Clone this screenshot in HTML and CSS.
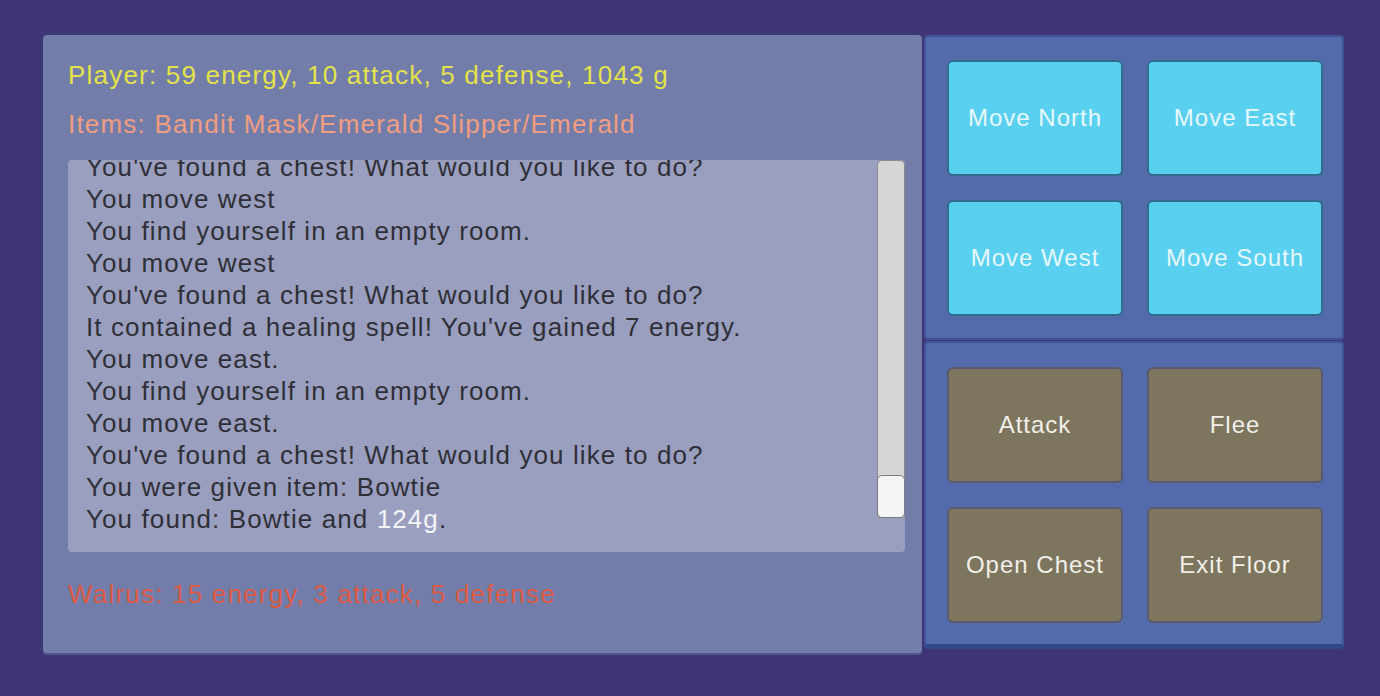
FILE: index.html
```html
<!DOCTYPE html>
<html>
<head>
<meta charset="utf-8">
<link rel="stylesheet" href="styles.css">
</head>
<body>
<div class="screen">
  <div class="main-panel">
    <div class="stat player">Player: 59 energy, 10 attack, 5 defense, 1043 g</div>
    <div class="stat items">Items: Bandit Mask/Emerald Slipper/Emerald</div>
    <div class="log">
      <div class="log-view">
        <div class="log-lines">
          <div>You've found a chest! What would you like to do?</div>
          <div>You move west</div>
          <div>You find yourself in an empty room.</div>
          <div>You move west</div>
          <div>You've found a chest! What would you like to do?</div>
          <div>It contained a healing spell! You've gained 7 energy.</div>
          <div>You move east.</div>
          <div>You find yourself in an empty room.</div>
          <div>You move east.</div>
          <div>You've found a chest! What would you like to do?</div>
          <div>You were given item: Bowtie</div>
          <div>You found: Bowtie and <span class="gold">124g</span>.</div>
        </div>
      </div>
      <div class="scrollbar"><div class="thumb"></div></div>
    </div>
    <div class="stat enemy">Walrus: 15 energy, 3 attack, 5 defense</div>
  </div>
  <div class="side">
    <div class="btn-panel">
      <button class="btn move">Move North</button>
      <button class="btn move">Move East</button>
      <button class="btn move">Move West</button>
      <button class="btn move">Move South</button>
    </div>
    <div class="btn-panel lower">
      <button class="btn action">Attack</button>
      <button class="btn action">Flee</button>
      <button class="btn action">Open Chest</button>
      <button class="btn action">Exit Floor</button>
    </div>
  </div>
</div>
</body>
</html>
```

FILE: styles.css
```css
html, body {
  margin: 0;
  padding: 0;
  background: #3d3576;
  width: 1380px;
  height: 696px;
  overflow: hidden;
  font-family: "Liberation Sans", Arial, sans-serif;
}

.screen {
  display: flex;
  padding: 35px 0 0 43px;
  align-items: flex-start;
}

.main-panel {
  width: 879px;
  height: 618px;
  box-sizing: border-box;
  background: #737daa;
  border-radius: 4px;
  box-shadow: 0 2px 0 #4f5788;
  padding: 24px 17px 0 25px;
  display: flex;
  flex-direction: column;
}

.stat {
  font-size: 26px;
  letter-spacing: 1.2px;
  line-height: 32px;
  height: 32px;
  white-space: nowrap;
}

.player { color: #e3e24a; }
.items { color: #f19d7f; margin-top: 17px; }
.enemy { color: #dc5a44; margin-top: 26px; }

.log {
  margin-top: 20px;
  height: 392px;
  flex: none;
  background: #9a9fc0;
  border-radius: 4px;
  display: flex;
  overflow: hidden;
}

.log-view {
  flex: 1;
  overflow: hidden;
  padding-left: 18px;
}

.log-lines {
  margin-top: -9px;
  color: #2f2f36;
  font-size: 26px;
  letter-spacing: 1.1px;
  line-height: 32px;
  white-space: nowrap;
}

.gold { color: #f4f4f6; }

.scrollbar {
  width: 28px;
  height: 358px;
  flex: none;
  box-sizing: border-box;
  background: #d6d6d6;
  border: 1px solid #8a8a8e;
  border-radius: 5px 5px 0 0;
  display: flex;
  flex-direction: column;
  justify-content: flex-end;
}

.thumb {
  height: 43px;
  margin: 0 -1px -1px;
  box-sizing: border-box;
  background: #f4f4f4;
  border: 1px solid #7a7a80;
  border-radius: 5px;
}

.side {
  display: flex;
  flex-direction: column;
  gap: 1px;
  margin-left: 2px;
}

.btn-panel {
  width: 420px;
  height: 305px;
  box-sizing: border-box;
  background: #536aab;
  border: 2px solid #3f5396;
  border-radius: 4px;
  padding: 23px 20px 23px 21px;
  display: grid;
  grid-template-columns: 176px 176px;
  grid-template-rows: 116px 116px;
  column-gap: 24px;
  row-gap: 24px;
}

.btn-panel.lower {
  height: 308px;
  padding-top: 24px;
  border-bottom-width: 5px;
  border-bottom-color: #34468a;
}

.btn {
  font-family: "Liberation Sans", Arial, sans-serif;
  font-size: 24px;
  letter-spacing: 1px;
  border-radius: 6px;
  padding: 0;
  margin: 0;
  cursor: pointer;
}

.move {
  background: #5ad0f0;
  border: 2px solid #2f6e8e;
  color: #e6f8fe;
}

.action {
  background: #7e755e;
  border: 2px solid #5a5a6c;
  color: #f1efe9;
}
```
